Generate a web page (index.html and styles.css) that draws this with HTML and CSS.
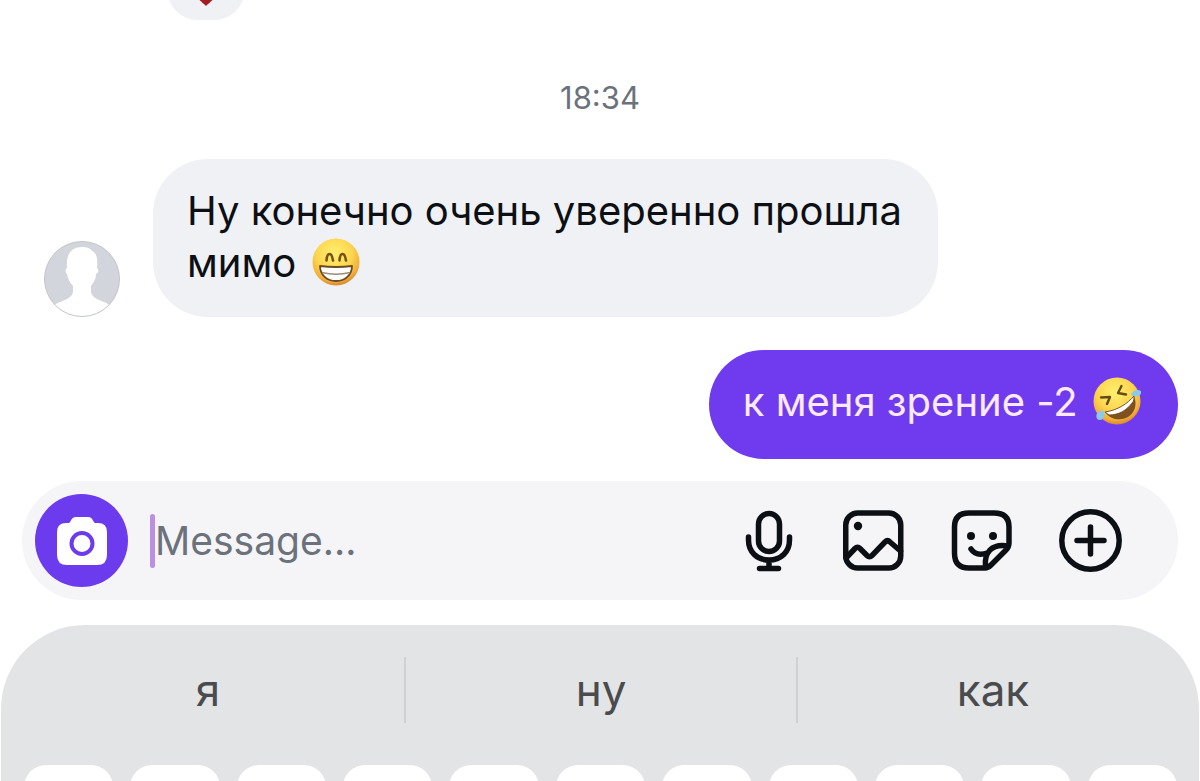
FILE: index.html
```html
<!DOCTYPE html>
<html lang="ru">
<head>
<meta charset="utf-8">
<meta name="viewport" content="width=device-width, initial-scale=1">
<title>Чат</title>
<link rel="stylesheet" href="styles.css">
</head>
<body>
<main class="thread">
  <div class="previous">
    <span class="reaction">
      <svg class="heart" viewBox="0 0 36 34" role="img" aria-label="Сердце"><path d="M18 34C12 28 0 20 0 10C0 4 4 0 9 0C13 0 16 2 18 6C20 2 23 0 27 0C32 0 36 4 36 10C36 20 24 28 18 34Z" fill="#a51c20"/></svg>
    </span>
  </div>
  <time class="time">18:34</time>
  <div class="row row-in">
    <svg class="avatar" viewBox="0 0 78 78" role="img" aria-label="Аватар">
      <defs><clipPath id="face"><circle cx="39" cy="40" r="38"/></clipPath></defs>
      <circle cx="39" cy="40" r="37.5" fill="#d3d5dc"/>
      <path clip-path="url(#face)" fill="#fff" d="M0 78V73L13 65C20 61 29 60 30 53V47C26 43 25 39 24 35C22 34 22 30 24 29C23 16 27 8 40 8C44 8 47 9 49 12C54 14 55 21 54 29C56 30 56 34 53 35C53 40 51 43 48 47V53C49 60 58 61 65 65L78 73V78Z"/>
      <circle cx="39" cy="40" r="37.5" fill="none" stroke="#c3c5cb"/>
    </svg>
    <p class="bubble bubble-in">Ну конечно очень уверенно прошла мимо
      <svg class="emoji" viewBox="0 0 48 48" role="img" aria-label="Улыбка">
        <defs><radialGradient id="skin" cx="46%" cy="32%" r="68%"><stop offset="0" stop-color="#fff06f"/><stop offset=".55" stop-color="#fdd650"/><stop offset=".86" stop-color="#f2ae38"/><stop offset="1" stop-color="#d98630"/></radialGradient></defs>
        <circle cx="24" cy="24" r="23.5" fill="url(#skin)"/>
        <path d="M14.500 22.500Q15 16 17.500 16T21 22.500M27.500 22.500Q28 16 30.500 16T34 22.500" fill="none" stroke="#765111" stroke-width="2.600" stroke-linecap="round" stroke-linejoin="round"/>
        <path d="M8 28Q24 30 40 28C40 37 33 43 24 43S8 37 8 28Z" fill="#fff" stroke="#684b24" stroke-width="1.800" stroke-linejoin="round"/>
        <path d="M10 34.500Q24 38 38 34.500" fill="none" stroke="#9b8b79" stroke-width="1.500"/>
      </svg>
    </p>
  </div>
  <div class="row row-out">
    <p class="bubble bubble-out">к меня зрение -2
      <svg class="emoji" viewBox="0 0 48 48" role="img" aria-label="Смех до слёз">
        <circle cx="24" cy="24" r="23.500" fill="url(#skin)"/>
        <path d="M8 20.500L17 20L14 27M28.500 9L25 16L33 17.500" fill="none" stroke="#684b14" stroke-width="2.400" stroke-linejoin="round" stroke-linecap="round"/>
        <path d="M12 35C25 34 34 27 41 19C45 28 41 38 33 41C25 44 17 42 12 35Z" fill="#80501f"/>
        <path d="M12 35C25 33 34 27 41 19C41 22 41 24 39 26C34 33 26 38 16 38Z" fill="#fff" stroke="#795528"/>
        <path d="M38 18C39 13 45 12 48 14C49 19 44 21 38 18Z" fill="#8bcbe9"/>
        <path d="M11 34C5 33 2 37 4 42C9 45 13 40 11 34Z" fill="#8bcbe9"/>
      </svg>
    </p>
  </div>
</main>
<form class="composer">
  <button class="camera" type="button" aria-label="Камера">
    <svg class="camera-icon" viewBox="0 0 50 48" aria-hidden="true"><path d="M9 6H12C14 5 14 0 19 0H31C36 0 36 5 38 6H41Q50 6 50 15V38Q50 48 40 48H10Q0 48 0 38V15Q0 6 9 6Z" fill="#fff"/><circle cx="25" cy="26.500" r="10.500" fill="#fff" stroke="#6b3bed" stroke-width="4"/></svg>
  </button>
  <span class="caret"></span>
  <input class="message" type="text" placeholder="Message..." aria-label="Message">
  <div class="tools">
    <button class="tool" type="button" aria-label="Голосовое сообщение">
      <svg class="icon" viewBox="0 0 63 63"><rect x="23.500" y="4.500" width="21" height="38" rx="10.500"/><path d="M13.500 28V31C13.500 43 22 51 34 51S54.500 43 54.500 31V28M34 51V59.500M24.500 59.500H43.500"/></svg>
    </button>
    <button class="tool" type="button" aria-label="Изображение">
      <svg class="icon" viewBox="0 0 63 63"><rect x="2.750" y="4" width="55" height="55" rx="12"/><path d="M3 49L12 39.500Q14.500 37 17 39.500L24 46.500Q26.500 49 29 46.500L42 33Q44.500 30.500 47 33L57.500 42"/><circle class="dot" cx="15" cy="17" r="4.200"/></svg>
    </button>
    <button class="tool" type="button" aria-label="Стикер">
      <svg class="icon" viewBox="0 0 63 63"><path d="M34 59H18Q3.500 59 3.500 44V18Q3.500 4 18 4H43Q58 4 58 18V34Q58 38 55 41L40 56Q37 59 34 59ZM34.500 58C33 44 40 34 57.500 37M20 40C24 46 30 46 36 44"/><circle class="dot" cx="20" cy="27" r="4"/><circle class="dot" cx="42" cy="27" r="4"/></svg>
    </button>
    <button class="tool" type="button" aria-label="Добавить">
      <svg class="icon" viewBox="0 0 63 63"><circle cx="31.500" cy="31.500" r="28.700"/><path d="M31.500 18V45M18 31.500H45"/></svg>
    </button>
  </div>
</form>
<section class="keyboard" aria-label="Клавиатура">
  <div class="suggestions">
    <button class="suggestion" type="button">я</button>
    <button class="suggestion" type="button">ну</button>
    <button class="suggestion" type="button">как</button>
  </div>
  <div class="keys">
    <button class="key" type="button" aria-label="й"></button>
    <button class="key" type="button" aria-label="ц"></button>
    <button class="key" type="button" aria-label="у"></button>
    <button class="key" type="button" aria-label="к"></button>
    <button class="key" type="button" aria-label="е"></button>
    <button class="key" type="button" aria-label="н"></button>
    <button class="key" type="button" aria-label="г"></button>
    <button class="key" type="button" aria-label="ш"></button>
    <button class="key" type="button" aria-label="щ"></button>
    <button class="key" type="button" aria-label="з"></button>
    <button class="key" type="button" aria-label="х"></button>
  </div>
</section>
</body>
</html>
```
FILE: styles.css
```css
* {
  box-sizing: border-box;
}

body {
  margin: 0;
  height: 100vh;
  overflow: hidden;
  display: flex;
  flex-direction: column;
  background: #fff;
  color: #0c1014;
  font-family: Inter, "Noto Sans", sans-serif;
  font-size: 40px;
}

button {
  padding: 0;
  border: 0;
  background: none;
  color: inherit;
  font: inherit;
}

svg {
  display: block;
}

.thread {
  display: flex;
  flex-direction: column;
  flex-shrink: 0;
}

.previous {
  height: 20px;
  padding-left: 167px;
  display: flex;
  align-items: flex-end;
  overflow: hidden;
}

.reaction {
  width: 78px;
  height: 62px;
  flex-shrink: 0;
  display: flex;
  align-items: center;
  justify-content: center;
  border-radius: 31px;
  background: #f0f1f5;
}

.heart {
  width: 36px;
  height: 34px;
}

.time {
  margin: 58px 0 41px;
  text-align: center;
  font-size: 31px;
  line-height: 40px;
  color: #6b727b;
}

.row {
  display: flex;
  align-items: flex-end;
  padding: 0 22px;
}

.row-in {
  gap: 32px;
  padding-left: 43px;
}

.row-out {
  justify-content: flex-end;
  margin-top: 33px;
}

.avatar {
  width: 78px;
  height: 78px;
  flex-shrink: 0;
}

.bubble {
  margin: 0;
  padding: 26px 34px 28px;
  border-radius: 55px;
  line-height: 52px;
  font-feature-settings: "calt" 0;
}

.bubble-in {
  max-width: 785px;
  background: #f0f1f5;
}

.bubble-out {
  padding: 26px 37px 31px 34px;
  background: #703bee;
  color: #fbeaff;
}

.emoji {
  display: inline-block;
  width: 48px;
  height: 48px;
  margin-left: 4px;
  vertical-align: -9px;
}

.composer {
  height: 119px;
  flex-shrink: 0;
  margin: 22px 22px 0;
  padding: 0 56px 0 13px;
  display: flex;
  align-items: center;
  border-radius: 60px;
  background: #f5f5f8;
}

.camera {
  width: 93px;
  height: 93px;
  flex-shrink: 0;
  display: grid;
  place-items: center;
  border-radius: 50%;
  background: #6b3bed;
}

.camera-icon {
  width: 50px;
  height: 48px;
}

.caret {
  width: 5px;
  height: 54px;
  flex-shrink: 0;
  margin-left: 22px;
  border-radius: 3px;
  background: #b990e2;
}

.message {
  flex: 1;
  min-width: 0;
  height: 60px;
  padding: 0;
  border: 0;
  outline: 0;
  background: none;
  color: inherit;
  font: inherit;
  font-size: 39px;
}

.message::placeholder {
  color: #6b727b;
  opacity: 1;
}

.tools {
  display: flex;
  gap: 45px;
}

.tool,
.icon {
  width: 63px;
  height: 63px;
}

.icon {
  fill: none;
  stroke: #0c1014;
  stroke-width: 5.5;
  stroke-linecap: round;
  stroke-linejoin: round;
}

.icon .dot {
  fill: #0c1014;
  stroke: none;
}

.keyboard {
  flex: 1 1 0;
  min-height: 0;
  overflow: hidden;
  margin: 25px 1px 0;
  padding: 32px 11px 0;
  border-radius: 84px 84px 0 0;
  background: #e2e4e6;
}

.suggestions {
  display: grid;
  grid-template-columns: repeat(3, 1fr);
}

.suggestion {
  height: 66px;
  color: #4a4b4d;
  font-size: 44px;
  line-height: 66px;
}

.suggestion + .suggestion {
  border-left: 2px solid #cfd1d4;
}

.keys {
  margin-top: 42px;
  padding: 0 11px 0 12px;
  display: grid;
  grid-template-columns: repeat(11, 1fr);
  gap: 17px;
}

.key {
  height: 120px;
  border-radius: 22px;
  background: #fff;
}
```
